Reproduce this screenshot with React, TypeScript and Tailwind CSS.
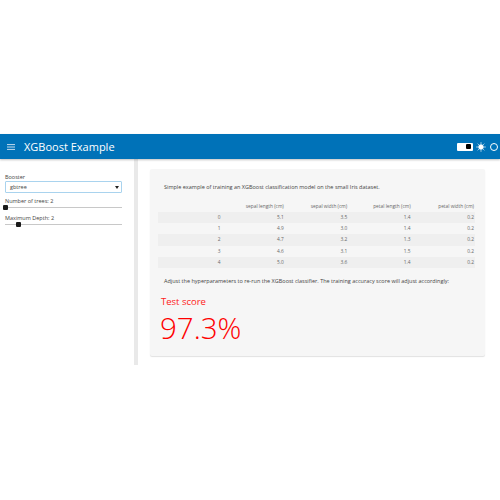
import React from "react";

const rows = [
  ["0", "5.1", "3.5", "1.4", "0.2"],
  ["1", "4.9", "3.0", "1.4", "0.2"],
  ["2", "4.7", "3.2", "1.3", "0.2"],
  ["3", "4.6", "3.1", "1.5", "0.2"],
  ["4", "5.0", "3.6", "1.4", "0.2"],
];
const heads = ["", "sepal length (cm)", "sepal width (cm)", "petal length (cm)", "petal width (cm)"];

function Slider({ label, pos }: { label: string; pos: string }) {
  return (
    <div className="flex flex-col">
      <div className="text-[5.5px] leading-[8px] text-[#444]">{label}</div>
      <div className="relative h-[5px] flex items-center">
        <div className="w-full h-[1.5px] bg-[#c8c8c8]" />
        <div className={`absolute top-0 w-[5px] h-[5px] rounded-[1px] bg-[#1a1a1a] ${pos}`} />
      </div>
    </div>
  );
}

export default function App() {
  return (
    <div className="h-[500px] w-[500px] bg-white flex flex-col pt-[134px] font-['Open_Sans',sans-serif] overflow-hidden">
      <header className="h-[25px] bg-[#0072b8] flex items-center text-white shadow-[0_1px_2px_rgba(0,0,0,0.25)] z-10 shrink-0">
        <svg width="8" height="6" viewBox="0 0 8 6" className="ml-[7px]">
          <path d="M0 .6h8M0 3h8M0 5.4h8" stroke="#dbe9f4" strokeWidth="0.9" />
        </svg>
        <div className="ml-[9px] text-[11px] leading-none">XGBoost Example</div>
        <div className="ml-auto flex items-center">
          <div className="w-[16px] h-[8px] rounded-[1px] bg-white flex items-center justify-end pr-[2px]">
            <div className="w-[5px] h-[5px] bg-black rounded-[1px]" />
          </div>
          <svg width="10" height="10" viewBox="0 0 24 24" className="ml-[3px]" fill="none" stroke="white" strokeWidth="2.2">
            <circle cx="12" cy="12" r="5.5" fill="white" />
            <path d="M12 1v3M12 20v3M1 12h3M20 12h3M4.2 4.2l2.1 2.1M17.7 17.7l2.1 2.1M4.2 19.8l2.1-2.1M17.7 6.3l2.1-2.1" />
          </svg>
          <div className="ml-[4px] mr-[2px] w-[8px] h-[8px] rounded-full border border-white" />
        </div>
      </header>
      <div className="flex h-[206px]">
        <aside className="w-[138px] shrink-0 border-r-[4px] border-[#e9e9e9] pl-[5px] pr-[12px] pt-[14px] flex flex-col">
          <div className="text-[5.5px] leading-[8px] text-[#444]">Booster</div>
          <div className="h-[12px] border border-[#a9d3ee] rounded-[1px] flex items-center pl-[4px] pr-[2px] text-[5.5px] text-[#444] bg-white">
            <span>gbtree</span>
            <span className="ml-auto w-0 h-0 border-l-[2px] border-r-[2px] border-t-[3px] border-l-transparent border-r-transparent border-t-[#222]" />
          </div>
          <div className="mt-[4px] flex flex-col gap-[4px]">
            <Slider label="Number of trees: 2" pos="-left-[2.5px]" />
            <Slider label="Maximum Depth: 2" pos="left-[10.5px]" />
          </div>
        </aside>
        <main className="flex-1 min-w-0 pl-[12px] pr-[15px] pt-[10px]">
          <div className="h-[187px] bg-[#f6f6f6] rounded-[2px] shadow-[0_1px_1px_rgba(0,0,0,0.12)] pl-[8px] pr-[10px] pt-[14px]">
            <p className="pl-[6px] text-[5.5px] leading-[9px] text-[#444]">
              Simple example of training an XGBoost classification model on the small Iris dataset.
            </p>
            <table className="mt-[9px] w-[317px] text-[4.8px] text-[#666] table-fixed">
              <thead>
                <tr className="h-[11px]">
                  {heads.map((h, i) => (
                    <th key={i} className="font-normal text-right pr-[1px]">{h}</th>
                  ))}
                </tr>
              </thead>
              <tbody>
                {rows.map((r, i) => (
                  <tr key={i} className={`h-[11.2px] ${i % 2 === 0 ? "bg-[#efefef]" : ""}`}>
                    {r.map((c, j) => (
                      <td key={j} className="text-right pr-[1px]">{c}</td>
                    ))}
                  </tr>
                ))}
              </tbody>
            </table>
            <p className="mt-[9px] pl-[6px] text-[5.5px] leading-[9px] text-[#444] whitespace-nowrap">
              Adjust the hyperparameters to re-run the XGBoost classifier. The training accuracy score will adjust accordingly:
            </p>
            <div className="mt-[9px] pl-[3px] text-[9.5px] leading-[14px] text-[#ff2020]">Test score</div>
            <div className="pl-[2px] -mt-[1px] text-[29.5px] leading-[40px] font-light text-[#ff0000]">97.3%</div>
          </div>
        </main>
      </div>
    </div>
  );
}
